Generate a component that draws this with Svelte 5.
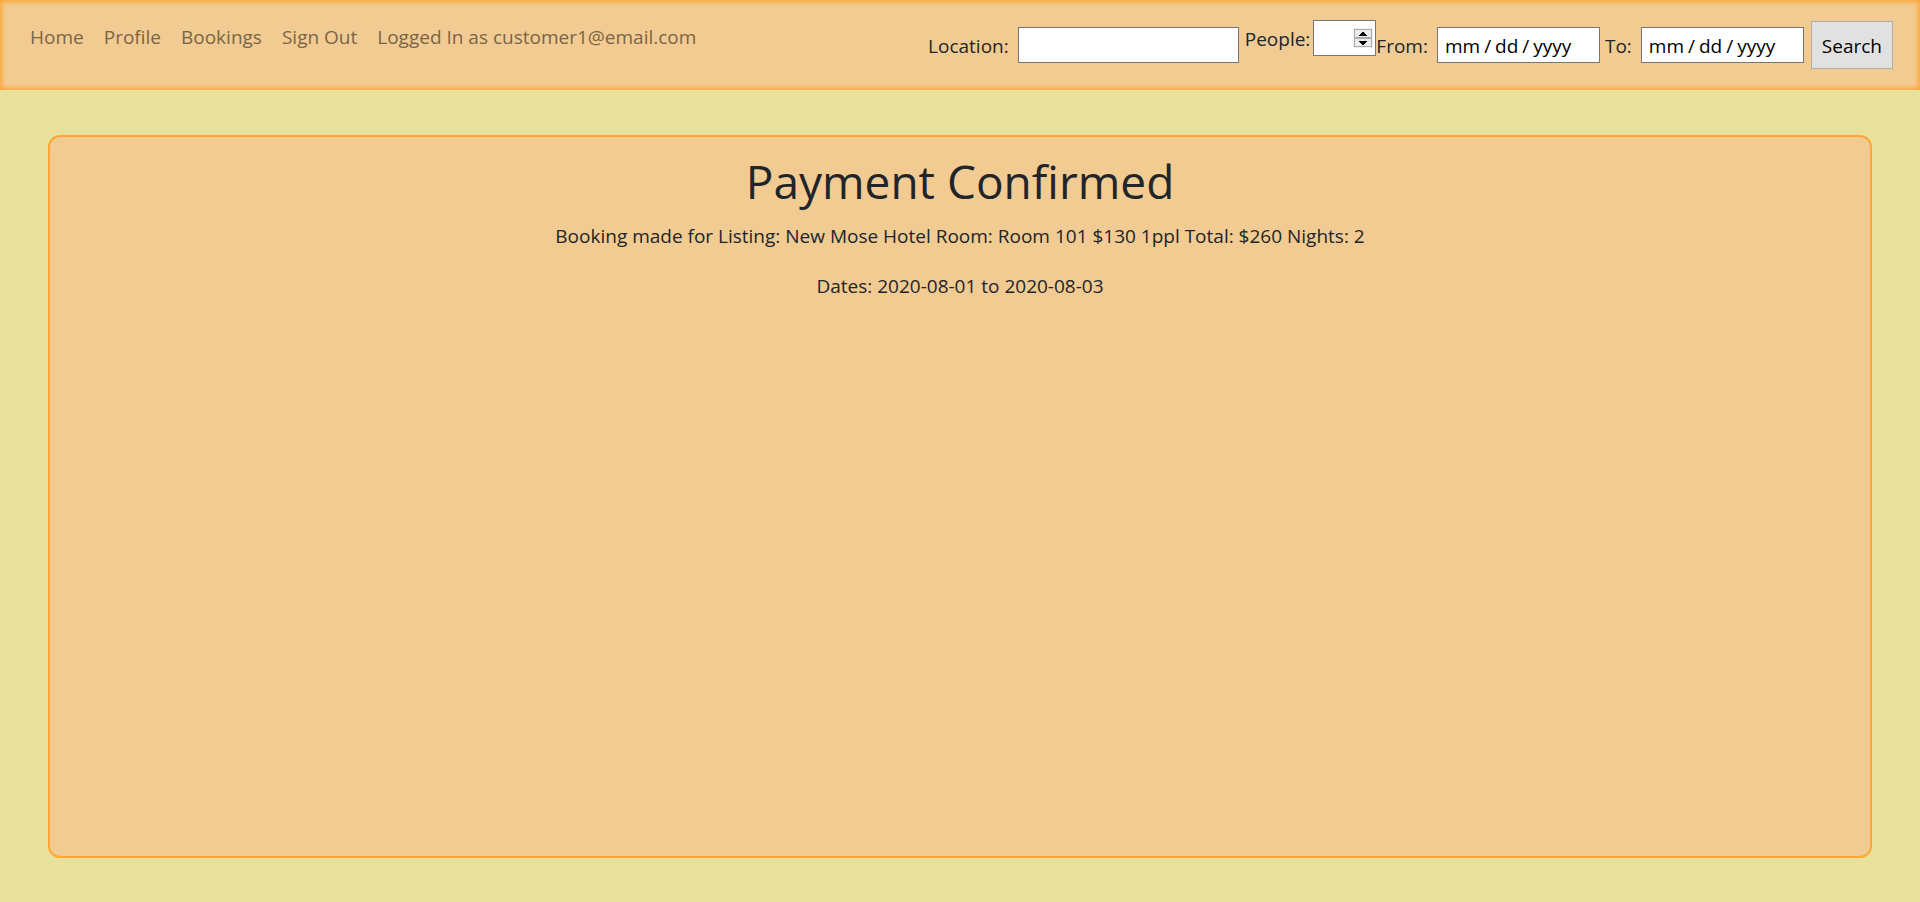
<script>
  const links = ['Home', 'Profile', 'Bookings', 'Sign Out'];
  const email = 'customer1@email.com';

  let place = $state('');
  let people = $state(null);
  let from = $state('');
  let to = $state('');

  function step(amount) {
    people = Math.max(0, (people ?? 0) + amount);
  }
</script>

<header>
  <nav aria-label="Main">
    {#each links as link}
      <a href="#{link}">{link}</a>
    {/each}
    <a href="#account">Logged In as {email}</a>
  </nav>

  <form onsubmit={(event) => event.preventDefault()}>
    <div class="field">
      <label for="place">Location:</label>
      <input id="place" class="place" type="text" bind:value={place} />
    </div>
    <div class="field people">
      <label for="people">People:</label>
      <div class="number">
        <input id="people" type="number" min="0" bind:value={people} />
        <div class="spinner">
          <button type="button" aria-label="More people" onclick={() => step(1)}>
            <svg viewBox="0 0 8 4" width="8" height="4"><path d="M3 0h2v1h1v1h1v1h1v1H0V3h1V2h1V1h1z" /></svg>
          </button>
          <button type="button" aria-label="Fewer people" onclick={() => step(-1)}>
            <svg viewBox="0 0 8 4" width="8" height="4"><path d="M0 0h8v1H7v1H6v1H5v1H3V3H2V2H1V1H0z" /></svg>
          </button>
        </div>
      </div>
    </div>
    <div class="field">
      <label for="from">From:</label>
      <input id="from" class="date" type="date" bind:value={from} />
    </div>
    <div class="field to">
      <label for="to">To:</label>
      <input id="to" class="date" type="date" bind:value={to} />
    </div>
    <button class="search" type="submit">Search</button>
  </form>
</header>

<main>
  <h1>Payment Confirmed</h1>
  <p>Booking made for Listing: New Mose Hotel Room: Room 101 $130 1ppl Total: $260 Nights: 2</p>
  <p>Dates: 2020-08-01 to 2020-08-03</p>
</main>

<style>
  :global(body) {
    margin: 0;
    background: #e8e19b;
    color: #212529;
    font-family: 'Segoe UI', 'Open Sans', 'Noto Sans', sans-serif;
    font-size: 19px;
    line-height: 30px;
  }

  header,
  header *,
  main {
    box-sizing: border-box;
  }

  header {
    display: flex;
    justify-content: space-between;
    align-items: flex-start;
    min-height: 90px;
    padding: 20px 27px 20px 30px;
    background: #f2cb92;
    box-shadow: inset 0 0 5px 2px #ffa535;
  }

  nav {
    display: flex;
    gap: 20px;
    padding-top: 2px;
  }

  nav a {
    color: #796547;
    text-decoration: none;
    white-space: nowrap;
  }

  form {
    display: flex;
    align-items: flex-start;
  }

  .field {
    display: flex;
    align-items: center;
    gap: 9px;
    margin-top: 7px;
  }

  label {
    padding-top: 2px;
  }

  .people {
    gap: 3px;
    margin: 0 0 0 6px;
  }

  .to {
    margin-left: 5px;
  }

  input {
    height: 36px;
    margin: 0;
    padding: 2px 6px;
    border: 1px solid #767676;
    border-radius: 0;
    background: #fff;
    color: #000;
    font: inherit;
  }

  .place {
    width: 221px;
  }

  .date {
    width: 163px;
    padding-top: 4px;
  }

  .date::-webkit-datetime-edit-text {
    padding: 0 3px;
  }

  .date::-webkit-calendar-picker-indicator {
    display: none;
  }

  .number {
    position: relative;
    display: flex;
  }

  .number input {
    width: 63px;
    padding-right: 24px;
    appearance: textfield;
  }

  .number input::-webkit-inner-spin-button {
    display: none;
  }

  .spinner {
    position: absolute;
    top: 8px;
    right: 3px;
    display: flex;
    flex-direction: column;
    padding: 1px;
    background: #f0f0f0;
  }

  .spinner button {
    display: flex;
    align-items: center;
    justify-content: center;
    width: 18px;
    height: 9px;
    padding: 0;
    border: 1px solid #acacac;
    background: #ececec;
  }

  .search {
    height: 48px;
    margin: 1px 0 0 7px;
    padding: 2px 10px 0;
    border: 1px solid #adadad;
    border-radius: 0;
    background: #e1e1e1;
    color: #000;
    font: inherit;
  }

  main {
    min-height: calc(80vh + 1px);
    margin: 45px 48px 0;
    padding: 14px;
    border: 2px solid #ffa535;
    border-radius: 12px;
    background: #f2cb92;
    text-align: center;
  }

  h1 {
    margin: 0 0 10px;
    font-size: 46px;
    font-weight: 400;
    line-height: 60px;
  }

  p {
    margin: 0 0 20px;
  }
</style>
